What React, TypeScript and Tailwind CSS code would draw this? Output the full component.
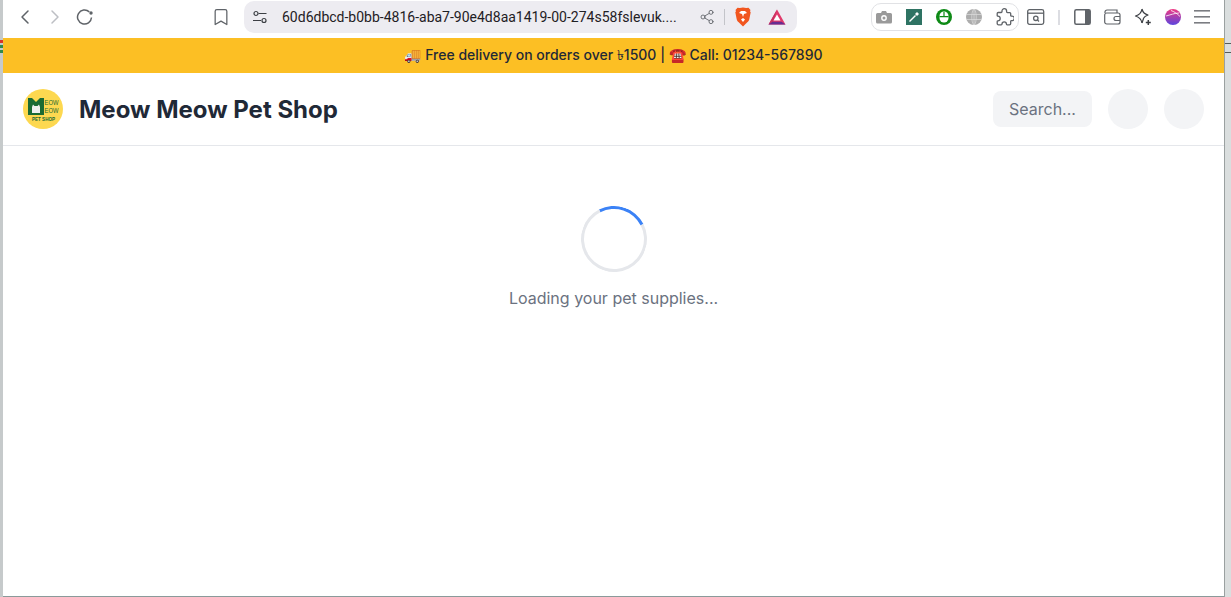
import { ChevronLeft, ChevronRight, Bookmark, Share2 } from "lucide-react";

const BraveIcon = () => (
  <svg width="18" height="20" viewBox="0 0 18 20">
    <path d="M9 .5l3.200.5 2.300-.2 2 2.200-.5 1.200.7 1-1.400 7c-.3 1.300-1 2.200-2 3L9 19.500 4.700 15.200c-1-.8-1.700-1.700-2-3l-1.400-7 .7-1-.5-1.200 2-2.200 2.300.2z" fill="#f1561f" />
    <path d="M9 11l-2 1.500L9 15l2-2.500zM5 6l3 1 1 3 1-3 3-1-2-2H7z" fill="#fff" />
  </svg>
);

const BatIcon = () => (
  <svg width="18" height="16" viewBox="0 0 18 16">
    <path d="M9 .5L.5 15.500h17z" fill="#e0396b" />
    <path d="M9 .5L.5 15.500 5 13z" fill="#c8325f" />
    <path d="M.5 15.500l4-2.700h9l4 2.700z" fill="#662d91" />
    <path d="M9 5.500l-3.500 6h7z" fill="#fff" />
  </svg>
);

const ReloadIcon = () => (
  <svg width="18" height="18" viewBox="0 0 18 18" fill="none" stroke="#5f6368" strokeWidth="1.500">
    <path d="M15.500 9.500a7 7 0 1 1-2.200-5.600" />
    <circle cx="15" cy="5" r="1.700" fill="#5f6368" stroke="none" />
  </svg>
);

const CameraIcon = () => (
  <svg width="16" height="14" viewBox="0 0 16 14">
    <path d="M1.500 3H5l1-2h4l1 2h3.500A1.500 1.500 0 0 1 16 4.500V12a1.500 1.500 0 0 1-1.500 1.500h-13A1.500 1.500 0 0 1 0 12V4.500A1.500 1.500 0 0 1 1.500 3z" fill="#9a9a9a" />
    <circle cx="8" cy="8" r="2.200" fill="none" stroke="#fff" strokeWidth="1.400" />
  </svg>
);

const DropperIcon = () => (
  <svg width="16" height="16" viewBox="0 0 16 16">
    <rect width="16" height="16" fill="#2e7363" />
    <path d="M3.500 12.500l6-6" stroke="#fff" strokeWidth="1.500" />
    <path d="M9 5l2-2 2 2-2 2z" fill="#fff" />
  </svg>
);

const MouseIcon = () => (
  <svg width="16" height="16" viewBox="0 0 16 16">
    <circle cx="8" cy="8" r="8" fill="#0e8a16" />
    <rect x="3.500" y="2.500" width="9" height="11" rx="4.500" fill="#fff" />
    <path d="M3.500 7h9v1.300h-9zM7.400 3h1.200v4.500H7.400z" fill="#0e8a16" />
  </svg>
);

const GlobeIcon = () => (
  <svg width="16" height="16" viewBox="0 0 16 16" fill="none">
    <circle cx="8" cy="8" r="8" fill="#acacac" />
    <path d="M0 5.500h16M0 10.500h16M8 0v16M8 0c-3 2-3 14 0 16M8 0c3 2 3 14 0 16" stroke="#dedede" strokeWidth=".7" />
  </svg>
);

const PuzzleIcon = () => (
  <svg width="18" height="18" viewBox="0 0 18 18" fill="none" stroke="#5f6368" strokeWidth="1.300" strokeLinejoin="round">
    <path d="M6 3.500V3a2.300 2.300 0 0 1 4.600 0v.8c0 .5.300.8.800.8h2.400c.5 0 .9.400.9.900v2c0 .4.400.7.800.6a2.300 2.300 0 1 1 0 4.500c-.4-.1-.8.200-.8.600v2.300c0 .8-.6 1.300-1.300 1.300h-2.300c-.4 0-.7-.3-.7-.7a2.200 2.200 0 0 0-4.400 0c0 .4-.3.7-.7.700H2.500c-.8 0-1.300-.6-1.300-1.300v-2c0-.4.300-.7.700-.7a2.300 2.300 0 0 0 0-4.600c-.4 0-.7-.3-.7-.7V5.500c0-.6.400-1 1-1h3c.5 0 .8-.4.800-1z" />
  </svg>
);

const TabSearchIcon = () => (
  <svg width="18" height="16" viewBox="0 0 18 16" fill="none" stroke="#5f6368" strokeWidth="1.300">
    <rect x=".7" y=".7" width="16" height="14.600" rx="1.800" />
    <path d="M.7 4.200h16" />
    <circle cx="8.800" cy="9.300" r="2.200" />
    <path d="M10.500 11l1.500 1.500" />
  </svg>
);

const PanelIcon = () => (
  <svg width="17" height="16" viewBox="0 0 17 16" fill="none">
    <rect x=".8" y=".8" width="15.400" height="14.400" rx="1.500" stroke="#5f6368" strokeWidth="1.500" />
    <rect x="11" y="1" width="5" height="14" fill="#5f6368" />
  </svg>
);

const WalletIcon = () => (
  <svg width="17" height="16" viewBox="0 0 17 16" fill="none" stroke="#5f6368" strokeWidth="1.200">
    <path d="M1 4V3a2 2 0 0 1 2-2h10v3" />
    <rect x=".7" y="4" width="15.300" height="11" rx="2" />
    <path d="M16 7.500h-4a2 2 0 0 0 0 4h4" />
  </svg>
);

const LeoIcon = () => (
  <svg width="18" height="18" viewBox="0 0 18 18" fill="none" stroke="#3c3f44" strokeWidth="1.200" strokeLinejoin="round">
    <path d="M8 1c.8 3.400 2.300 5.200 6 6-2.300.7-3.600 1.500-4.300 3M8 15c-.6-3.700-2.200-5.700-6.500-7C5.800 6.800 7.400 4.700 8 1" />
    <path d="M8 15l1.700-5" />
    <path d="M14.300 12v5M11.800 14.500h5" strokeWidth="1.500" />
  </svg>
);

const AvatarIcon = () => (
  <svg width="16" height="16" viewBox="0 0 16 16" fill="none">
    <defs>
      <linearGradient id="avatar" x1="0" y1="0" x2="0" y2="1">
        <stop offset="0" stopColor="#ef3a83" />
        <stop offset="1" stopColor="#5c45de" />
      </linearGradient>
    </defs>
    <circle cx="8" cy="8" r="8" fill="url(#avatar)" />
    <path d="M1 7c4-1 9-3 13-3M6 1.500c3 1 6 3 9 6" stroke="#fff" strokeWidth=".8" />
  </svg>
);

const MenuIcon = () => (
  <svg width="16" height="14" viewBox="0 0 16 14" fill="#7b7d82">
    <rect y="0" width="16" height="1.600" />
    <rect y="6" width="16" height="1.600" />
    <rect y="12" width="16" height="1.600" />
  </svg>
);

const Toolbar = () => {
  return (
    <div className="flex h-[38px] items-center bg-white pb-[4px]">
      <ChevronLeft size={24} strokeWidth={1.5} className="ml-[10px] text-[#5f6368]" />
      <ChevronRight size={24} strokeWidth={1.5} className="ml-[6px] text-[#bdbfc4]" />
      <div className="ml-[9px]"><ReloadIcon /></div>
      <Bookmark size={20} strokeWidth={1.5} className="ml-[117px] text-[#5f6368]" />
      <div className="ml-[13px] flex h-[32px] w-[553px] items-center rounded-[10px] bg-[#edecf1] pl-[8px]">
        <svg width="16" height="16" viewBox="0 0 16 16" fill="none" stroke="#3c3f44" strokeWidth="1.200">
          <circle cx="4" cy="4.500" r="2" />
          <path d="M6.500 4.500h8M1 11.500h8" />
          <circle cx="12" cy="11.500" r="2" />
        </svg>
        <span className="ml-[14px] w-[402px] whitespace-nowrap font-['Roboto',sans-serif] text-[14px] text-[#1f2024]">
          60d6dbcd-b0bb-4816-aba7-90e4d8aa1419-00-274s58fslevuk....
        </span>
        <Share2 size={16} strokeWidth={1.3} className="ml-[15px] text-[#5f6368]" />
        <div className="ml-[9px] h-[16px] w-px bg-[#c3c4c9]" />
        <div className="ml-[9px]"><BraveIcon /></div>
        <div className="ml-[16px]"><BatIcon /></div>
      </div>
      <div className="ml-[74px] flex h-[28px] w-[148px] items-center rounded-[10px] border border-[#e1e2e5] pl-[4px]">
        <CameraIcon />
        <div className="ml-[14px]"><DropperIcon /></div>
        <div className="ml-[14px]"><MouseIcon /></div>
        <div className="ml-[14px]"><GlobeIcon /></div>
        <div className="ml-[14px]"><PuzzleIcon /></div>
      </div>
      <div className="ml-[8px]"><TabSearchIcon /></div>
      <div className="ml-[13px] h-[15px] w-[2px] bg-[#dcdde2]" />
      <div className="ml-[14px]"><PanelIcon /></div>
      <div className="ml-[13px]"><WalletIcon /></div>
      <div className="ml-[13px]"><LeoIcon /></div>
      <div className="ml-[13px]"><AvatarIcon /></div>
      <div className="ml-[13px]"><MenuIcon /></div>
    </div>
  );
};

const Logo = () => (
  <div className="flex h-[40px] w-[40px] items-center justify-center rounded-full bg-[#fdd850]">
    <svg width="32" height="26" viewBox="0 0 32 26">
      <path d="M1 2h4l4 4 4-4h4v17H1z" fill="#1a6b33" />
      <path d="M5 11l1-2.500 1.500 1.500h3L12 8.500l1 2.500v6H5z" fill="#eef0ee" />
      <text x="17.500" y="9" fontSize="6.500" textLength="14" lengthAdjust="spacingAndGlyphs" fill="#1a6b33" fontFamily="Liberation Sans">EOW</text>
      <text x="17.500" y="17" fontSize="6.500" textLength="14" lengthAdjust="spacingAndGlyphs" fill="#1a6b33" fontFamily="Liberation Sans">EOW</text>
      <text x="5" y="25" fontSize="5" fontWeight="bold" textLength="23" lengthAdjust="spacingAndGlyphs" fill="#1a6b33" fontFamily="Liberation Sans">PET SHOP</text>
    </svg>
  </div>
);

const Header = () => {
  return (
    <header className="flex h-[73px] items-center justify-between border-b border-[#e5e7eb] px-[20px]">
      <div className="flex items-center gap-4">
        <Logo />
        <h1 className="pt-[2px] text-2xl font-bold text-[#1f2937]">Meow Meow Pet Shop</h1>
      </div>
      <div className="flex items-center gap-4">
        <div className="flex h-[36px] w-[99px] items-center rounded-lg bg-[#f3f4f6] pl-4 text-base text-[#6b7280]">Search...</div>
        <div className="h-10 w-10 rounded-full bg-[#f3f4f6]" />
        <div className="h-10 w-10 rounded-full bg-[#f3f4f6]" />
      </div>
    </header>
  );
};

export default function App() {
  return (
    <div className="flex h-[597px] w-[1231px] overflow-hidden bg-white font-['Inter',sans-serif]">
      <div className="flex w-[3px] shrink-0 flex-col bg-[#c6cacb] pt-[40px]">
        <div className="h-[3px] bg-[#d9342b]" />
        <div className="mt-[2px] h-[3px] bg-[#2f8a4b]" />
        <div className="mt-[2px] h-[3px] bg-[#2f8a4b]" />
      </div>
      <div className="flex w-[1221px] shrink-0 flex-col">
        <Toolbar />
        <div className="flex h-[35px] items-center justify-center bg-[#fcbf24] pb-[2px] text-sm font-medium text-[#1f2937]">
          🚚 Free delivery on orders over ৳1500 | ☎️ Call: 01234-567890
        </div>
        <Header />
        <main className="flex flex-1 flex-col items-center border-b border-[#8a9a9a] pt-[60px]">
          <div className="h-[66px] w-[66px] rotate-[18deg] rounded-full border-[3px] border-[#e5e7eb] border-t-[#3b82f6]" />
          <p className="mt-[14px] text-base text-[#6b7280]">Loading your pet supplies...</p>
        </main>
      </div>
      <div className="flex w-[7px] shrink-0 flex-col border-l border-[#9aa0a0] bg-[#dadede] pt-[43px]">
        <div className="h-px bg-[#555a5a]" />
        <div className="mt-[8px] h-px bg-[#555a5a]" />
      </div>
    </div>
  );
}
